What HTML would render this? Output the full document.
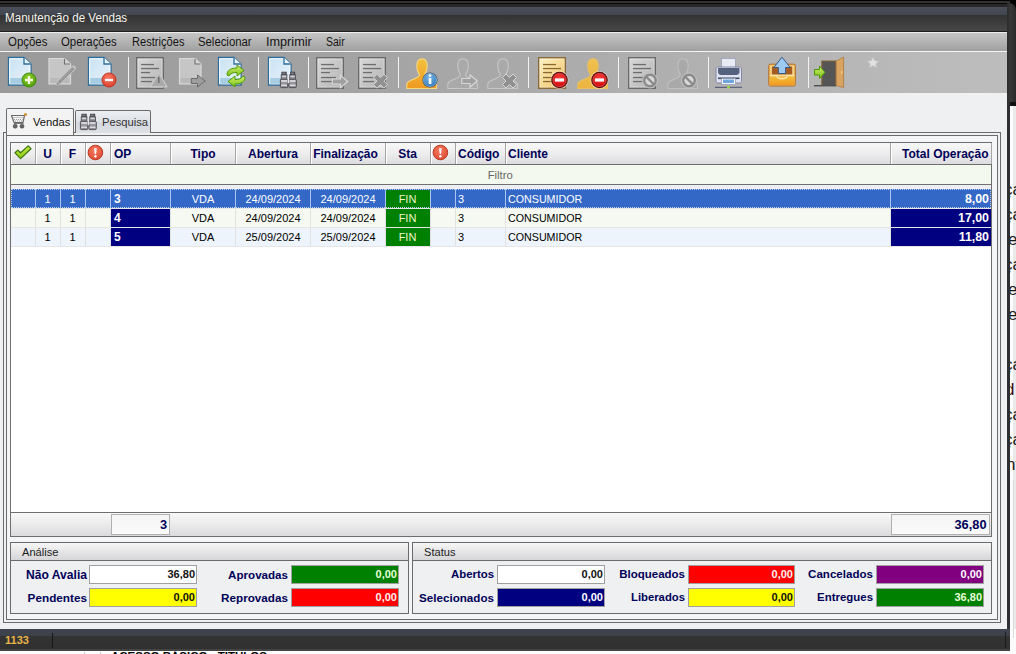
<!DOCTYPE html>
<html><head><meta charset="utf-8">
<style>
*{margin:0;padding:0;box-sizing:border-box}
html,body{width:1016px;height:654px;overflow:hidden;background:#fff;font-family:"Liberation Sans",sans-serif}
.a{position:absolute}
.t{white-space:nowrap;line-height:1}
svg{position:absolute;overflow:visible}
</style></head><body>

<div class="a" style="left:0px;top:0px;width:1016px;height:654px;background:#fdfdfd"></div>
<div class="a" style="left:0px;top:0px;width:1007px;height:651px;background:#eff0f2"></div>
<div class="a" style="left:0px;top:0px;width:1016px;height:7px;background:#000"></div>
<div class="a" style="left:0px;top:1px;width:1012px;height:2px;background:#333"></div>
<div class="a" style="left:0px;top:3px;width:1012px;height:1px;background:#080808"></div>
<div class="a" style="left:0px;top:4px;width:1010px;height:3px;background:#282828"></div>
<div class="a" style="left:0px;top:7px;width:1007px;height:8px;background:linear-gradient(#4a4f5a,#41464f)"></div>
<div class="a" style="left:0px;top:15px;width:1007px;height:16px;background:linear-gradient(#333,#474747)"></div>
<div class="a" style="left:0px;top:31px;width:1007px;height:1px;background:#1e1e1e"></div>
<div class="a t" style="left:5px;top:12px;font-size:12.5px;color:#f3f3ec;transform:scaleX(0.93);transform-origin:0 0">Manutenção de Vendas</div>
<div class="a" style="left:1010px;top:0px;width:6px;height:106px;background:#000"></div>
<div class="a" style="left:1007px;top:3px;width:9px;height:103px;background:linear-gradient(90deg,#2c2c2c,#383838 40%,#2a2a2a);border-top-right-radius:7px"></div>
<div class="a" style="left:1010px;top:102px;width:6px;height:4px;background:#111"></div>
<div class="a" style="left:1007px;top:104px;width:3px;height:547px;background:#2f3033"></div>
<div class="a" style="left:1010px;top:106px;width:6px;height:548px;overflow:hidden;background:#fcfcfc"><div class="a" style="left:3px;top:0;width:3px;height:548px;background:#eaeaea"></div><div class="a t" style="left:-6px;top:75px;font-size:17px;color:#1a1a1a">ça</div><div class="a t" style="left:-6px;top:100px;font-size:17px;color:#1a1a1a">ça</div><div class="a t" style="left:-2px;top:125px;font-size:17px;color:#1a1a1a">e</div><div class="a t" style="left:-6px;top:150px;font-size:17px;color:#1a1a1a">ça</div><div class="a t" style="left:-2px;top:175px;font-size:17px;color:#1a1a1a">e</div><div class="a t" style="left:-2px;top:200px;font-size:17px;color:#1a1a1a">er</div><div class="a t" style="left:-6px;top:250px;font-size:17px;color:#1a1a1a">ça</div><div class="a t" style="left:-5px;top:275px;font-size:17px;color:#3a1010">d</div><div class="a t" style="left:-6px;top:300px;font-size:17px;color:#1a1a1a">ça</div><div class="a t" style="left:-6px;top:325px;font-size:17px;color:#1a1a1a">ça</div><div class="a t" style="left:-4px;top:350px;font-size:17px;color:#1a1a1a">nt</div></div>
<div class="a" style="left:1010px;top:629px;width:6px;height:25px;background:#fbfbfb"></div>
<div class="a" style="left:1013px;top:480px;width:1px;height:158px;background:#dadada"></div>
<div class="a" style="left:0px;top:629px;width:1010px;height:22px;background:linear-gradient(#40444c 0,#3d4149 7px,#333 7px,#303030)"></div>
<div class="a" style="left:1005px;top:632px;width:1px;height:16px;background:#1a1a1a"></div>
<div class="a" style="left:0px;top:649px;width:1010px;height:2px;background:#434343"></div>
<div class="a" style="left:0px;top:651px;width:1016px;height:3px;background:#fdfdfd"></div>
<div class="a" style="left:84px;top:652px;width:1px;height:2px;background:#c8c8c8"></div>
<div class="a" style="left:100px;top:652px;width:1px;height:2px;background:#c8c8c8"></div>
<div class="a" style="left:0;top:651px;width:1010px;height:3px;overflow:hidden"><div class="a t" style="left:111px;top:0px;font-size:11.5px;font-weight:bold;color:#000;letter-spacing:0px">ACESSO BÁSICO - TITULOS</div></div>
<div class="a t" style="left:5px;top:635px;font-size:11px;font-weight:bold;color:#e8b54a">1133</div>
<div class="a" style="left:52px;top:633px;width:1px;height:15px;background:#161616"></div>
<div class="a" style="left:0px;top:32px;width:1007px;height:1px;background:#ececec"></div>
<div class="a" style="left:0px;top:33px;width:1007px;height:18px;background:linear-gradient(#c6c6c6,#a0a0a0)"></div>
<div class="a" style="left:0px;top:51px;width:1007px;height:1px;background:#f4f4f4"></div>
<div class="a t" style="left:7.5px;top:36px;font-size:12px;color:#141414;transform:scaleX(0.952);transform-origin:0 0">Opções</div>
<div class="a t" style="left:61.4px;top:36px;font-size:12px;color:#141414;transform:scaleX(0.949);transform-origin:0 0">Operações</div>
<div class="a t" style="left:131.5px;top:36px;font-size:12px;color:#141414;transform:scaleX(0.926);transform-origin:0 0">Restrições</div>
<div class="a t" style="left:198.2px;top:36px;font-size:12px;color:#141414;transform:scaleX(0.945);transform-origin:0 0">Selecionar</div>
<div class="a t" style="left:266.3px;top:36px;font-size:12px;color:#141414;transform:scaleX(1.055);transform-origin:0 0">Imprimir</div>
<div class="a t" style="left:326.2px;top:36px;font-size:12px;color:#141414;transform:scaleX(0.873);transform-origin:0 0">Sair</div>
<div class="a" style="left:0px;top:52px;width:1007px;height:41px;background:linear-gradient(90deg,#9a9a9a,#a3a3a3 35%,#b3b3b3 75%,#bdbdbd)"></div>
<div class="a" style="left:128px;top:57px;width:1px;height:31px;background:#f2f2f2"></div>
<div class="a" style="left:258px;top:57px;width:1px;height:31px;background:#f2f2f2"></div>
<div class="a" style="left:308px;top:57px;width:1px;height:31px;background:#f2f2f2"></div>
<div class="a" style="left:398px;top:57px;width:1px;height:31px;background:#f2f2f2"></div>
<div class="a" style="left:528px;top:57px;width:1px;height:31px;background:#f2f2f2"></div>
<div class="a" style="left:618px;top:57px;width:1px;height:31px;background:#f2f2f2"></div>
<div class="a" style="left:708px;top:57px;width:1px;height:31px;background:#f2f2f2"></div>
<div class="a" style="left:808px;top:57px;width:1px;height:31px;background:#f2f2f2"></div>
<svg style="left:0;top:0" width="1016" height="100" viewBox="0 0 1016 100">
<defs>
<linearGradient id="gBlue" x1="0" y1="0" x2="1" y2="1"><stop offset="0" stop-color="#c9e2f3"/><stop offset="1" stop-color="#e9f3fa"/></linearGradient>
<linearGradient id="gGrey" x1="0" y1="0" x2="1" y2="1"><stop offset="0" stop-color="#d8d8d8"/><stop offset="1" stop-color="#b4b4b4"/></linearGradient>
<linearGradient id="gYel" x1="0" y1="0" x2="1" y2="1"><stop offset="0" stop-color="#fdf3c8"/><stop offset="1" stop-color="#f0c060"/></linearGradient>
<linearGradient id="gOr" x1="0" y1="0" x2="0" y2="1"><stop offset="0" stop-color="#f2c13e"/><stop offset="1" stop-color="#f09a22"/></linearGradient>
<linearGradient id="gOr2" x1="0" y1="0" x2="0" y2="1"><stop offset="0" stop-color="#f0c050"/><stop offset="1" stop-color="#ecb440"/></linearGradient>
<radialGradient id="gRed" cx=".5" cy=".35" r=".7"><stop offset="0" stop-color="#ff4040"/><stop offset="1" stop-color="#d00000"/></radialGradient>
<radialGradient id="gGreen" cx=".45" cy=".35" r=".7"><stop offset="0" stop-color="#8fd22c"/><stop offset="1" stop-color="#4e9c0c"/></radialGradient>
<radialGradient id="gRed2" cx=".45" cy=".35" r=".7"><stop offset="0" stop-color="#f87a62"/><stop offset="1" stop-color="#d8402a"/></radialGradient>
<radialGradient id="gInfo" cx=".45" cy=".35" r=".7"><stop offset="0" stop-color="#7cb8e8"/><stop offset="1" stop-color="#2e78b8"/></radialGradient>
<linearGradient id="gGArrow" x1="0" y1="0" x2="0" y2="1"><stop offset="0" stop-color="#d2f070"/><stop offset="1" stop-color="#7cc016"/></linearGradient>
</defs>
<path d="M8.5,57.5H24L31,64V85H8.5Z" fill="url(#gBlue)" stroke="#2e6d9b" stroke-width="1.3"/>
<path d="M9.7,58.7H23.5L29.8,64.5V83.8H9.7Z" fill="none" stroke="#f4fbff" stroke-width="1"/>
<rect x="10.2" y="78" width="19.6" height="5.8" fill="#a6cde2"/>
<path d="M24,57.5V64H31Z" fill="#e8f4fb"/>
<path d="M24,57.8V64H30.5" fill="none" stroke="#2e6d9b" stroke-width="1.3"/>
<circle cx="29" cy="80" r="7" fill="url(#gGreen)" stroke="#3f8a0a" stroke-width="1"/>
<path d="M25,80H33M29,76V84" stroke="#f6fadc" stroke-width="2.3"/>
<path d="M49.0,58.5H64.5L70.5,64V84H49.0Z" fill="#c6c6c6" stroke="#d9d9d9" stroke-width="1.2"/>
<rect x="50.0" y="78" width="19.5" height="5" fill="#b9b9b9"/>
<path d="M64.5,58.8L70.5,64V64H64.5Z" fill="#d4d4d4"/>
<path d="M64.5,58.8V64H70.0" fill="none" stroke="#707070" stroke-width="1.1"/>
<path d="M59,82.5L73.5,68" stroke="#c4c4c4" stroke-width="4.6" stroke-linecap="round"/><path d="M59,82.5L73.5,68" stroke="#8c8c8c" stroke-width="2.6"/><path d="M60.2,81.2L73,68.4" stroke="#b0b0b0" stroke-width="1"/><path d="M56.3,85.2L57.2,81.8L59.7,84.3Z" fill="#7a7a7a" stroke="#c4c4c4" stroke-width=".6"/>
<path d="M88.5,57.5H104L111,64V85H88.5Z" fill="url(#gBlue)" stroke="#2e6d9b" stroke-width="1.3"/>
<path d="M89.7,58.7H103.5L109.8,64.5V83.8H89.7Z" fill="none" stroke="#f4fbff" stroke-width="1"/>
<rect x="90.2" y="78" width="19.6" height="5.8" fill="#a6cde2"/>
<path d="M104,57.5V64H111Z" fill="#e8f4fb"/>
<path d="M104,57.8V64H110.5" fill="none" stroke="#2e6d9b" stroke-width="1.3"/>
<circle cx="109" cy="80" r="7" fill="url(#gRed2)" stroke="#c03020" stroke-width="1"/>
<path d="M105,80H113" stroke="#fff" stroke-width="2.3"/>
<rect x="136.7" y="57.7" width="26.6" height="30.6" fill="url(#gGrey)" stroke="#6a6a6a" stroke-width="1.4"/>
<rect x="138" y="59" width="24" height="28" fill="none" stroke="rgba(255,255,255,.35)" stroke-width="1"/><rect x="141" y="63.9" width="13" height="1.3" fill="#6d6d6d"/><rect x="141" y="67.9" width="18" height="1.3" fill="#6d6d6d"/><rect x="141" y="71.9" width="9" height="1.3" fill="#6d6d6d"/><rect x="141" y="76.9" width="15" height="1.3" fill="#6d6d6d"/><rect x="141" y="80.9" width="11" height="1.3" fill="#6d6d6d"/>
<path d="M158.8,72.8L167,86.8H150.6Z" fill="#a9a9a9" stroke="#cacaca" stroke-width="1.2" stroke-linejoin="round"/><path d="M158.8,77V83" stroke="#6e6e6e" stroke-width="1.5"/>
<path d="M179.5,58.5H195L201,64V84H179.5Z" fill="#c6c6c6" stroke="#d9d9d9" stroke-width="1.2"/>
<rect x="180.5" y="78" width="19.5" height="5" fill="#b9b9b9"/>
<path d="M195,58.8L201,64V64H195Z" fill="#d4d4d4"/>
<path d="M195,58.8V64H200.5" fill="none" stroke="#707070" stroke-width="1.1"/>
<path d="M191.3,78.5H197.5V75L205.2,81L197.5,87V83.5H191.3Z" fill="#9e9e9e" stroke="#6a6a6a" stroke-width="1"/>
<path d="M218.5,57.5H234L241,64V85H218.5Z" fill="url(#gBlue)" stroke="#2e6d9b" stroke-width="1.3"/>
<path d="M219.7,58.7H233.5L239.8,64.5V83.8H219.7Z" fill="none" stroke="#f4fbff" stroke-width="1"/>
<rect x="220.2" y="78" width="19.6" height="5.8" fill="#a6cde2"/>
<path d="M234,57.5V64H241Z" fill="#e8f4fb"/>
<path d="M234,57.8V64H240.5" fill="none" stroke="#2e6d9b" stroke-width="1.3"/>
<path d="M227,75C227,70 231,68 237,68V65L244,70.5L237,76V72.5C233,72.5 231,73 229,76Z" fill="url(#gGArrow)" stroke="#4e9a0a" stroke-width="1"/>
<path d="M245,77C245,82 241,84 235,84V87L228,81.5L235,76V79.5C239,79.5 241,79 243,76Z" fill="url(#gGArrow)" stroke="#4e9a0a" stroke-width="1"/>
<path d="M268.5,57.5H284L291,64V85H268.5Z" fill="url(#gBlue)" stroke="#2e6d9b" stroke-width="1.3"/>
<path d="M269.7,58.7H283.5L289.8,64.5V83.8H269.7Z" fill="none" stroke="#f4fbff" stroke-width="1"/>
<rect x="270.2" y="78" width="19.6" height="5.8" fill="#a6cde2"/>
<path d="M284,57.5V64H291Z" fill="#e8f4fb"/>
<path d="M284,57.8V64H290.5" fill="none" stroke="#2e6d9b" stroke-width="1.3"/>
<rect x="281.8" y="72" width="4.6" height="2.8" fill="#4c4c54" stroke="#3a3a40" stroke-width=".5"/>
<rect x="282.6" y="72.6" width="2.6" height="1" fill="#9a9aa4"/>
<rect x="281.2" y="74.8" width="5.8" height="4.6" fill="#8e8e94" stroke="#4a4a50" stroke-width=".8"/>
<rect x="282" y="75.6" width="4.2" height="1.6" fill="#d0d0d4"/>
<rect x="280.4" y="79.2" width="7.4" height="8.4" rx="1" fill="#96969c" stroke="#48484e" stroke-width=".9"/>
<rect x="281.2" y="80.2" width="5.8" height="1.6" fill="#e4e4e8"/>
<rect x="281.2" y="84.6" width="5.8" height="1.4" fill="#dcdce0"/>
<rect x="290.3" y="72" width="4.6" height="2.8" fill="#4c4c54" stroke="#3a3a40" stroke-width=".5"/>
<rect x="291.1" y="72.6" width="2.6" height="1" fill="#9a9aa4"/>
<rect x="289.7" y="74.8" width="5.8" height="4.6" fill="#8e8e94" stroke="#4a4a50" stroke-width=".8"/>
<rect x="290.5" y="75.6" width="4.2" height="1.6" fill="#d0d0d4"/>
<rect x="288.9" y="79.2" width="7.4" height="8.4" rx="1" fill="#96969c" stroke="#48484e" stroke-width=".9"/>
<rect x="289.7" y="80.2" width="5.8" height="1.6" fill="#e4e4e8"/>
<rect x="289.7" y="84.6" width="5.8" height="1.4" fill="#dcdce0"/>
<rect x="287.6" y="76.5" width="1.5" height="6.5" fill="#e8e8ea"/>
<rect x="316.7" y="57.7" width="26.6" height="30.6" fill="url(#gGrey)" stroke="#6a6a6a" stroke-width="1.4"/>
<rect x="318" y="59" width="24" height="28" fill="none" stroke="rgba(255,255,255,.35)" stroke-width="1"/><rect x="321" y="63.9" width="13" height="1.3" fill="#6d6d6d"/><rect x="321" y="67.9" width="18" height="1.3" fill="#6d6d6d"/><rect x="321" y="71.9" width="9" height="1.3" fill="#6d6d6d"/><rect x="321" y="76.9" width="15" height="1.3" fill="#6d6d6d"/><rect x="321" y="80.9" width="11" height="1.3" fill="#6d6d6d"/>
<path d="M332.3,79.0H340.5V75.3L347.7,81.5L340.5,87.7V84.0H332.3Z" fill="#a0a0a0" stroke="#d8d8d8" stroke-width="1.2"/>
<rect x="358.7" y="57.7" width="26.6" height="30.6" fill="url(#gGrey)" stroke="#6a6a6a" stroke-width="1.4"/>
<rect x="360" y="59" width="24" height="28" fill="none" stroke="rgba(255,255,255,.35)" stroke-width="1"/><rect x="363" y="63.9" width="13" height="1.3" fill="#6d6d6d"/><rect x="363" y="67.9" width="18" height="1.3" fill="#6d6d6d"/><rect x="363" y="71.9" width="9" height="1.3" fill="#6d6d6d"/><rect x="363" y="76.9" width="15" height="1.3" fill="#6d6d6d"/><rect x="363" y="80.9" width="11" height="1.3" fill="#6d6d6d"/>
<path d="M373.5,77.7L377.0,74.2L380.5,77.7L384.0,74.2L387.5,77.7L384.0,81.2L387.5,84.7L384.0,88.2L380.5,84.7L377.0,88.2L373.5,84.7L377.0,81.2Z" fill="#909090" stroke="#d6d6d6" stroke-width="1"/>
<path d="M422,58.8C417,58.8 416.8,64 416.8,66.5C416.8,70 418.3,73 419.5,75C419.5,76.5 417,77.5 414,79C410,80.5 407,82 406.8,84V88.5H436.5V84C436,82 433,80.5 430,79C427,77.5 424.5,76.5 424.5,75C425.7,73 427.2,70 427.2,66.5C427.2,64 427,58.8 422,58.8Z" fill="url(#gOr)" stroke="#f6d880" stroke-width="1.1"/>
<circle cx="430" cy="80" r="7.6" fill="#34526e"/><circle cx="430" cy="80" r="6.5" fill="url(#gInfo)" stroke="#a8d0f0" stroke-width=".6"/>
<rect x="428.8" y="78" width="2.5" height="6" fill="#fff"/><circle cx="430" cy="75.6" r="1.4" fill="#fff"/>
<path d="M463,58.8C458,58.8 457.8,64 457.8,66.5C457.8,70 459.3,73 460.5,75C460.5,76.5 458,77.5 455,79C451,80.5 448,82 447.8,84V88.5H477.5V84C477,82 474,80.5 471,79C468,77.5 465.5,76.5 465.5,75C466.7,73 468.2,70 468.2,66.5C468.2,64 468,58.8 463,58.8Z" fill="#a9a9a9" stroke="#c6c6c6" stroke-width="1.1"/>
<path d="M461.8,78.5H470V74.8L477.2,81L470,87.2V83.5H461.8Z" fill="#a0a0a0" stroke="#d8d8d8" stroke-width="1.2"/>
<path d="M503,58.8C498,58.8 497.8,64 497.8,66.5C497.8,70 499.3,73 500.5,75C500.5,76.5 498,77.5 495,79C491,80.5 488,82 487.8,84V88.5H517.5V84C517,82 514,80.5 511,79C508,77.5 505.5,76.5 505.5,75C506.7,73 508.2,70 508.2,66.5C508.2,64 508,58.8 503,58.8Z" fill="#a9a9a9" stroke="#c6c6c6" stroke-width="1.1"/>
<path d="M502.5,77.5L506.0,74L509.5,77.5L513.0,74L516.5,77.5L513.0,81L516.5,84.5L513.0,88L509.5,84.5L506.0,88L502.5,84.5L506.0,81Z" fill="#909090" stroke="#d6d6d6" stroke-width="1"/>
<rect x="538.7" y="57.7" width="26.6" height="30.6" fill="url(#gYel)" stroke="#8a6a3a" stroke-width="1.4"/>
<rect x="540" y="59" width="24" height="28" fill="none" stroke="rgba(255,255,255,.35)" stroke-width="1"/><rect x="543" y="63.9" width="13" height="1.3" fill="#8a6a30"/><rect x="543" y="67.9" width="18" height="1.3" fill="#8a6a30"/><rect x="543" y="71.9" width="9" height="1.3" fill="#8a6a30"/><rect x="543" y="76.9" width="15" height="1.3" fill="#8a6a30"/><rect x="543" y="80.9" width="11" height="1.3" fill="#8a6a30"/>
<circle cx="559.5" cy="80" r="9.1" fill="rgba(255,240,230,.55)"/><circle cx="559.5" cy="80" r="8.3" fill="#640808"/><circle cx="559.5" cy="80" r="6.6" fill="url(#gRed)" stroke="#ff9090" stroke-width=".5"/>
<rect x="554.9" y="78.4" width="9.2" height="3.2" fill="#fff"/>
<path d="M593,58.8C588,58.8 587.8,64 587.8,66.5C587.8,70 589.3,73 590.5,75C590.5,76.5 588,77.5 585,79C581,80.5 578,82 577.8,84V88.5H607.5V84C607,82 604,80.5 601,79C598,77.5 595.5,76.5 595.5,75C596.7,73 598.2,70 598.2,66.5C598.2,64 598,58.8 593,58.8Z" fill="url(#gOr2)" stroke="#e8c060" stroke-width="1.1"/>
<circle cx="599.5" cy="80" r="9.1" fill="rgba(255,240,230,.55)"/><circle cx="599.5" cy="80" r="8.3" fill="#640808"/><circle cx="599.5" cy="80" r="6.6" fill="url(#gRed)" stroke="#ff9090" stroke-width=".5"/>
<rect x="594.9" y="78.4" width="9.2" height="3.2" fill="#fff"/>
<rect x="628.7" y="57.7" width="26.6" height="30.6" fill="url(#gGrey)" stroke="#6a6a6a" stroke-width="1.4"/>
<rect x="630" y="59" width="24" height="28" fill="none" stroke="rgba(255,255,255,.35)" stroke-width="1"/><rect x="633" y="63.9" width="13" height="1.3" fill="#6d6d6d"/><rect x="633" y="67.9" width="18" height="1.3" fill="#6d6d6d"/><rect x="633" y="71.9" width="9" height="1.3" fill="#6d6d6d"/><rect x="633" y="76.9" width="15" height="1.3" fill="#6d6d6d"/><rect x="633" y="80.9" width="11" height="1.3" fill="#6d6d6d"/>
<circle cx="650" cy="80.5" r="7.6" fill="#d8d8d8" stroke="#bdbdbd" stroke-width=".8"/><circle cx="650" cy="80.5" r="5.8" fill="none" stroke="#8a8a8a" stroke-width="2.4"/>
<path d="M646,76.5L654,84.5" stroke="#8a8a8a" stroke-width="2.4"/>
<path d="M683,58.8C678,58.8 677.8,64 677.8,66.5C677.8,70 679.3,73 680.5,75C680.5,76.5 678,77.5 675,79C671,80.5 668,82 667.8,84V88.5H697.5V84C697,82 694,80.5 691,79C688,77.5 685.5,76.5 685.5,75C686.7,73 688.2,70 688.2,66.5C688.2,64 688,58.8 683,58.8Z" fill="#a9a9a9" stroke="#c0c0c0" stroke-width="1.1"/>
<circle cx="689" cy="80.5" r="7.6" fill="#d8d8d8" stroke="#bdbdbd" stroke-width=".8"/><circle cx="689" cy="80.5" r="5.8" fill="none" stroke="#8a8a8a" stroke-width="2.4"/>
<path d="M685,76.5L693,84.5" stroke="#8a8a8a" stroke-width="2.4"/>
<rect x="721.5" y="58.5" width="14" height="11" fill="#e9ebf5" stroke="#9aa0b8" stroke-width=".8"/>
<path d="M716,69C716,67.5 717,67 718.5,67H738.5C740,67 741.5,67.5 741.5,69V81.5C741.5,82.5 740.5,83 739.5,83H718C716.8,83 716,82.5 716,81.5Z" fill="#dfe2f1" stroke="#7a80a0" stroke-width=".9"/>
<path d="M718,68H739.5V72C739.5,74.5 737,75 735,75H722C720,75 718,74.5 718,72Z" fill="#55627e"/>
<rect x="718" y="77.5" width="21.5" height="1.6" fill="#3e4a66"/>
<rect x="721.5" y="78.5" width="14" height="6" fill="#fff" stroke="#8088a8" stroke-width=".6"/><rect x="723" y="79.5" width="11" height="3.6" fill="#6ea6de"/>
<rect x="715" y="86.8" width="27" height="1.1" fill="#555a78"/><circle cx="728.5" cy="87.3" r="1.3" fill="#9ce030"/>
<rect x="768.8" y="64.2" width="26.5" height="21.8" rx="1.5" fill="#f4c060" stroke="#b06a24" stroke-width="1"/>
<rect x="770.5" y="65.8" width="23" height="10" fill="#fbe29c"/><rect x="771.8" y="66.5" width="20.5" height="8" fill="#a65c20"/>
<path d="M770,75.6H776.5C777.5,80 786.5,80 787.5,75.6H794.3V85H770Z" fill="url(#gOr)"/><path d="M770,75.6H776.5C777.5,80 786.5,80 787.5,75.6H794.3" fill="none" stroke="#fde6a8" stroke-width="1.3"/>
<path d="M782,57.2L790.2,67.5H785.6V73.5H778.4V67.5H773.8Z" fill="#9ccaf0" stroke="#3a5a88" stroke-width="1"/>
<rect x="821.8" y="61" width="14.4" height="24.5" fill="#555" stroke="#8a6434" stroke-width="1"/>
<path d="M836.2,61.2L843.6,57V87.5L836.2,85.6Z" fill="#d9a462" stroke="#b07a38" stroke-width=".8"/>
<rect x="841" y="71" width="1.3" height="3" fill="#f0d070"/>
<rect x="814" y="85" width="22" height="1.4" fill="#4e4e4e"/>
<path d="M814.5,69.5H819.5V66L825,72.3L819.5,78.5V75H814.5Z" fill="url(#gGArrow)" stroke="#4a9a08" stroke-width="1"/>
<path d="M873,57.2L874.7,60.8L878.6,61.2L875.7,63.8L876.5,67.6L873,65.6L869.5,67.6L870.3,63.8L867.4,61.2L871.3,60.8Z" fill="#e2e2e2" stroke="#c4c4c4" stroke-width=".6"/>
</svg>
<div class="a" style="left:3px;top:132px;width:998px;height:491px;border:1px solid #6b6b6b;background:#eff0f2"></div>
<div class="a" style="left:6px;top:108px;width:68px;height:27px;border:1px solid #6b6b6b;border-bottom:none;border-radius:2px 2px 0 0;background:#f3f3f3"></div>
<div class="a" style="left:75px;top:110px;width:76px;height:23px;border:1px solid #6b6b6b;border-bottom:none;border-radius:2px 2px 0 0;background:linear-gradient(#edeff2,#dfe2e7 45%,#d5d9df 55%,#dde0e5)"></div>
<div class="a t" style="left:33px;top:117px;font-size:11.2px;color:#111">Vendas</div>
<div class="a t" style="left:102px;top:117px;font-size:11.2px;color:#333">Pesquisa</div>
<div class="a" style="left:6px;top:135px;width:992px;height:485px;border:1px solid #6b6b6b;background:#f4f5f6"></div>
<div class="a" style="left:10px;top:142px;width:982px;height:395px;border:1px solid #6e6e6e;background:#fff"></div>
<div class="a" style="left:11px;top:143px;width:25px;height:21px;background:linear-gradient(#f8f8f8,#ececed 55%,#dcdcdf);border-right:1px solid #a5a5a5;border-left:1px solid #fff"></div>
<div class="a" style="left:36px;top:143px;width:25px;height:21px;background:linear-gradient(#f8f8f8,#ececed 55%,#dcdcdf);border-right:1px solid #a5a5a5;border-left:1px solid #fff"></div>
<div class="a" style="left:61px;top:143px;width:25px;height:21px;background:linear-gradient(#f8f8f8,#ececed 55%,#dcdcdf);border-right:1px solid #a5a5a5;border-left:1px solid #fff"></div>
<div class="a" style="left:86px;top:143px;width:25px;height:21px;background:linear-gradient(#f8f8f8,#ececed 55%,#dcdcdf);border-right:1px solid #a5a5a5;border-left:1px solid #fff"></div>
<div class="a" style="left:111px;top:143px;width:60px;height:21px;background:linear-gradient(#f8f8f8,#ececed 55%,#dcdcdf);border-right:1px solid #a5a5a5;border-left:1px solid #fff"></div>
<div class="a" style="left:171px;top:143px;width:65px;height:21px;background:linear-gradient(#f8f8f8,#ececed 55%,#dcdcdf);border-right:1px solid #a5a5a5;border-left:1px solid #fff"></div>
<div class="a" style="left:236px;top:143px;width:75px;height:21px;background:linear-gradient(#f8f8f8,#ececed 55%,#dcdcdf);border-right:1px solid #a5a5a5;border-left:1px solid #fff"></div>
<div class="a" style="left:311px;top:143px;width:75px;height:21px;background:linear-gradient(#f8f8f8,#ececed 55%,#dcdcdf);border-right:1px solid #a5a5a5;border-left:1px solid #fff"></div>
<div class="a" style="left:386px;top:143px;width:45px;height:21px;background:linear-gradient(#f8f8f8,#ececed 55%,#dcdcdf);border-right:1px solid #a5a5a5;border-left:1px solid #fff"></div>
<div class="a" style="left:431px;top:143px;width:25px;height:21px;background:linear-gradient(#f8f8f8,#ececed 55%,#dcdcdf);border-right:1px solid #a5a5a5;border-left:1px solid #fff"></div>
<div class="a" style="left:456px;top:143px;width:50px;height:21px;background:linear-gradient(#f8f8f8,#ececed 55%,#dcdcdf);border-right:1px solid #a5a5a5;border-left:1px solid #fff"></div>
<div class="a" style="left:506px;top:143px;width:385px;height:21px;background:linear-gradient(#f8f8f8,#ececed 55%,#dcdcdf);border-right:1px solid #a5a5a5;border-left:1px solid #fff"></div>
<div class="a" style="left:891px;top:143px;width:101px;height:21px;background:linear-gradient(#f8f8f8,#ececed 55%,#dcdcdf);border-right:1px solid #a5a5a5;border-left:1px solid #fff"></div>
<div class="a" style="left:11px;top:164px;width:980px;height:1px;background:#6e6e6e"></div>
<div class="a t" style="left:27.5px;top:148px;width:40px;text-align:center;font-size:12px;font-weight:bold;color:#000058">U</div>
<div class="a t" style="left:52.5px;top:148px;width:40px;text-align:center;font-size:12px;font-weight:bold;color:#000058">F</div>
<div class="a t" style="left:114px;top:148px;font-size:12px;font-weight:bold;color:#000058">OP</div>
<div class="a t" style="left:163.0px;top:148px;width:80px;text-align:center;font-size:12px;font-weight:bold;color:#000058">Tipo</div>
<div class="a t" style="left:233.0px;top:148px;width:80px;text-align:center;font-size:12px;font-weight:bold;color:#000058">Abertura</div>
<div class="a t" style="left:305.5px;top:148px;width:80px;text-align:center;font-size:12px;font-weight:bold;color:#000058">Finalização</div>
<div class="a t" style="left:377.5px;top:148px;width:60px;text-align:center;font-size:12px;font-weight:bold;color:#000058">Sta</div>
<div class="a t" style="left:458px;top:148px;font-size:12px;font-weight:bold;color:#000058">Código</div>
<div class="a t" style="left:508px;top:148px;font-size:12px;font-weight:bold;color:#000058">Cliente</div>
<div class="a t" style="left:788.5px;top:148px;width:200px;text-align:right;font-size:12px;font-weight:bold;color:#000058">Total Operação</div>
<div class="a" style="left:11px;top:165px;width:980px;height:19px;background:#f4f9ef"></div>
<div class="a t" style="left:460.2px;top:170px;width:80px;text-align:center;font-size:11.3px;color:#666">Filtro</div>
<div class="a" style="left:11px;top:184px;width:980px;height:1px;background:#707070"></div>
<div class="a" style="left:11px;top:185px;width:980px;height:4px;background:#eeeff2"></div>
<div class="a" style="left:11px;top:189px;width:980px;height:19px;background:#3468c7"></div>
<div class="a" style="left:35px;top:189px;width:1px;height:19px;background:#a9c4ee"></div>
<div class="a" style="left:60px;top:189px;width:1px;height:19px;background:#a9c4ee"></div>
<div class="a" style="left:85px;top:189px;width:1px;height:19px;background:#a9c4ee"></div>
<div class="a" style="left:110px;top:189px;width:1px;height:19px;background:#a9c4ee"></div>
<div class="a" style="left:170px;top:189px;width:1px;height:19px;background:#a9c4ee"></div>
<div class="a" style="left:235px;top:189px;width:1px;height:19px;background:#a9c4ee"></div>
<div class="a" style="left:310px;top:189px;width:1px;height:19px;background:#a9c4ee"></div>
<div class="a" style="left:385px;top:189px;width:1px;height:19px;background:#a9c4ee"></div>
<div class="a" style="left:430px;top:189px;width:1px;height:19px;background:#a9c4ee"></div>
<div class="a" style="left:455px;top:189px;width:1px;height:19px;background:#a9c4ee"></div>
<div class="a" style="left:505px;top:189px;width:1px;height:19px;background:#a9c4ee"></div>
<div class="a" style="left:890px;top:189px;width:1px;height:19px;background:#a9c4ee"></div>
<div class="a" style="left:386px;top:190px;width:44px;height:18px;background:#008000"></div>
<div class="a t" style="left:37.5px;top:194px;width:20px;text-align:center;font-size:11px;color:#fff">1</div>
<div class="a t" style="left:62.5px;top:194px;width:20px;text-align:center;font-size:11px;color:#fff">1</div>
<div class="a t" style="left:114px;top:193px;font-size:12px;font-weight:bold;color:#fff">3</div>
<div class="a t" style="left:173.0px;top:194px;width:60px;text-align:center;font-size:11px;color:#fff">VDA</div>
<div class="a t" style="left:238.0px;top:194px;width:70px;text-align:center;font-size:11px;color:#fff">24/09/2024</div>
<div class="a t" style="left:313.0px;top:194px;width:70px;text-align:center;font-size:11px;color:#fff">24/09/2024</div>
<div class="a t" style="left:387.5px;top:194px;width:40px;text-align:center;font-size:11px;color:#f4f4c8">FIN</div>
<div class="a t" style="left:458px;top:194px;font-size:11px;color:#fff">3</div>
<div class="a t" style="left:508px;top:194px;font-size:10.7px;color:#fff">CONSUMIDOR</div>
<div class="a t" style="left:789px;top:193px;width:200px;text-align:right;font-size:12.4px;font-weight:bold;color:#fff">8,00</div>
<div class="a" style="left:11px;top:189px;width:980px;height:19px;border:1px dotted #b8cdf0"></div>
<div class="a" style="left:11px;top:208px;width:980px;height:19px;background:#f5f9f1"></div>
<div class="a" style="left:11px;top:208px;width:980px;height:1px;background:#e6e6e6"></div>
<div class="a" style="left:35px;top:208px;width:1px;height:19px;background:#e1e1e1"></div>
<div class="a" style="left:60px;top:208px;width:1px;height:19px;background:#e1e1e1"></div>
<div class="a" style="left:85px;top:208px;width:1px;height:19px;background:#e1e1e1"></div>
<div class="a" style="left:110px;top:208px;width:1px;height:19px;background:#e1e1e1"></div>
<div class="a" style="left:170px;top:208px;width:1px;height:19px;background:#e1e1e1"></div>
<div class="a" style="left:235px;top:208px;width:1px;height:19px;background:#e1e1e1"></div>
<div class="a" style="left:310px;top:208px;width:1px;height:19px;background:#e1e1e1"></div>
<div class="a" style="left:385px;top:208px;width:1px;height:19px;background:#e1e1e1"></div>
<div class="a" style="left:430px;top:208px;width:1px;height:19px;background:#e1e1e1"></div>
<div class="a" style="left:455px;top:208px;width:1px;height:19px;background:#e1e1e1"></div>
<div class="a" style="left:505px;top:208px;width:1px;height:19px;background:#e1e1e1"></div>
<div class="a" style="left:890px;top:208px;width:1px;height:19px;background:#e1e1e1"></div>
<div class="a" style="left:111px;top:209px;width:59px;height:18px;background:#000080"></div>
<div class="a" style="left:891px;top:209px;width:100px;height:18px;background:#000080"></div>
<div class="a" style="left:386px;top:209px;width:44px;height:18px;background:#008000"></div>
<div class="a t" style="left:37.5px;top:213px;width:20px;text-align:center;font-size:11px;color:#000">1</div>
<div class="a t" style="left:62.5px;top:213px;width:20px;text-align:center;font-size:11px;color:#000">1</div>
<div class="a t" style="left:114px;top:212px;font-size:12px;font-weight:bold;color:#fff">4</div>
<div class="a t" style="left:173.0px;top:213px;width:60px;text-align:center;font-size:11px;color:#000">VDA</div>
<div class="a t" style="left:238.0px;top:213px;width:70px;text-align:center;font-size:11px;color:#000">24/09/2024</div>
<div class="a t" style="left:313.0px;top:213px;width:70px;text-align:center;font-size:11px;color:#000">24/09/2024</div>
<div class="a t" style="left:387.5px;top:213px;width:40px;text-align:center;font-size:11px;color:#f4f4c8">FIN</div>
<div class="a t" style="left:458px;top:213px;font-size:11px;color:#000">3</div>
<div class="a t" style="left:508px;top:213px;font-size:10.7px;color:#000">CONSUMIDOR</div>
<div class="a t" style="left:789px;top:212px;width:200px;text-align:right;font-size:12.4px;font-weight:bold;color:#fff">17,00</div>
<div class="a" style="left:11px;top:227px;width:980px;height:19px;background:#eef4fc"></div>
<div class="a" style="left:11px;top:227px;width:980px;height:1px;background:#e6e6e6"></div>
<div class="a" style="left:35px;top:227px;width:1px;height:19px;background:#e1e1e1"></div>
<div class="a" style="left:60px;top:227px;width:1px;height:19px;background:#e1e1e1"></div>
<div class="a" style="left:85px;top:227px;width:1px;height:19px;background:#e1e1e1"></div>
<div class="a" style="left:110px;top:227px;width:1px;height:19px;background:#e1e1e1"></div>
<div class="a" style="left:170px;top:227px;width:1px;height:19px;background:#e1e1e1"></div>
<div class="a" style="left:235px;top:227px;width:1px;height:19px;background:#e1e1e1"></div>
<div class="a" style="left:310px;top:227px;width:1px;height:19px;background:#e1e1e1"></div>
<div class="a" style="left:385px;top:227px;width:1px;height:19px;background:#e1e1e1"></div>
<div class="a" style="left:430px;top:227px;width:1px;height:19px;background:#e1e1e1"></div>
<div class="a" style="left:455px;top:227px;width:1px;height:19px;background:#e1e1e1"></div>
<div class="a" style="left:505px;top:227px;width:1px;height:19px;background:#e1e1e1"></div>
<div class="a" style="left:890px;top:227px;width:1px;height:19px;background:#e1e1e1"></div>
<div class="a" style="left:111px;top:228px;width:59px;height:18px;background:#000080"></div>
<div class="a" style="left:891px;top:228px;width:100px;height:18px;background:#000080"></div>
<div class="a" style="left:386px;top:228px;width:44px;height:18px;background:#008000"></div>
<div class="a t" style="left:37.5px;top:232px;width:20px;text-align:center;font-size:11px;color:#000">1</div>
<div class="a t" style="left:62.5px;top:232px;width:20px;text-align:center;font-size:11px;color:#000">1</div>
<div class="a t" style="left:114px;top:231px;font-size:12px;font-weight:bold;color:#fff">5</div>
<div class="a t" style="left:173.0px;top:232px;width:60px;text-align:center;font-size:11px;color:#000">VDA</div>
<div class="a t" style="left:238.0px;top:232px;width:70px;text-align:center;font-size:11px;color:#000">25/09/2024</div>
<div class="a t" style="left:313.0px;top:232px;width:70px;text-align:center;font-size:11px;color:#000">25/09/2024</div>
<div class="a t" style="left:387.5px;top:232px;width:40px;text-align:center;font-size:11px;color:#f4f4c8">FIN</div>
<div class="a t" style="left:458px;top:232px;font-size:11px;color:#000">3</div>
<div class="a t" style="left:508px;top:232px;font-size:10.7px;color:#000">CONSUMIDOR</div>
<div class="a t" style="left:789px;top:231px;width:200px;text-align:right;font-size:12.4px;font-weight:bold;color:#fff">11,80</div>
<div class="a" style="left:11px;top:246px;width:980px;height:1px;background:#e6e6e6"></div>
<div class="a" style="left:11px;top:512px;width:980px;height:1px;background:#6e6e6e"></div>
<div class="a" style="left:11px;top:513px;width:980px;height:23px;background:linear-gradient(#f8f8f8,#ebebec 50%,#dadadd)"></div>
<div class="a" style="left:111px;top:514px;width:59px;height:21px;border:1px solid #b0b0b0;background:linear-gradient(#f4f4f4,#fafafa)"></div>
<div class="a" style="left:891px;top:514px;width:99px;height:21px;border:1px solid #b0b0b0;background:linear-gradient(#f4f4f4,#fafafa)"></div>
<div class="a t" style="left:127px;top:519px;width:40px;text-align:right;font-size:12.8px;font-weight:bold;color:#000058">3</div>
<div class="a t" style="left:926.5px;top:519px;width:60px;text-align:right;font-size:12.8px;font-weight:bold;color:#000058">36,80</div>
<div class="a" style="left:10px;top:542px;width:399px;height:72px;border:1px solid #6b6b6b;background:#eff0f2"></div>
<div class="a" style="left:11px;top:543px;width:397px;height:17px;background:linear-gradient(#f7f7f7,#e4e4e6 55%,#d6d6d9)"></div>
<div class="a" style="left:11px;top:560px;width:397px;height:1px;background:#6b6b6b"></div>
<div class="a t" style="left:22px;top:547px;font-size:11.1px;color:#1a1a1a">Análise</div>
<div class="a" style="left:412px;top:542px;width:580px;height:72px;border:1px solid #6b6b6b;background:#eff0f2"></div>
<div class="a" style="left:413px;top:543px;width:578px;height:17px;background:linear-gradient(#f7f7f7,#e4e4e6 55%,#d6d6d9)"></div>
<div class="a" style="left:413px;top:560px;width:578px;height:1px;background:#6b6b6b"></div>
<div class="a t" style="left:424px;top:547px;font-size:11.1px;color:#1a1a1a">Status</div>
<div class="a t" style="left:-33px;top:569px;width:120px;text-align:right;font-size:12.1px;font-weight:bold;color:#000058">Não Avalia</div>
<div class="a" style="left:89px;top:565px;width:108px;height:19px;border:1px solid #a0a0a0;background:#fff"></div>
<div class="a t" style="left:115px;top:569px;width:80px;text-align:right;font-size:11px;font-weight:bold;color:#111">36,80</div>
<div class="a t" style="left:-33px;top:592px;width:120px;text-align:right;font-size:11.75px;font-weight:bold;color:#000058">Pendentes</div>
<div class="a" style="left:89px;top:588px;width:108px;height:19px;border:1px solid #a0a0a0;background:#ffff00"></div>
<div class="a t" style="left:115px;top:592px;width:80px;text-align:right;font-size:11px;font-weight:bold;color:#111">0,00</div>
<div class="a t" style="left:168px;top:569px;width:120px;text-align:right;font-size:11.6px;font-weight:bold;color:#000058">Aprovadas</div>
<div class="a" style="left:291px;top:565px;width:108px;height:19px;border:1px solid #a0a0a0;background:#008000"></div>
<div class="a t" style="left:317px;top:569px;width:80px;text-align:right;font-size:11px;font-weight:bold;color:#e8ffd8">0,00</div>
<div class="a t" style="left:168px;top:592px;width:120px;text-align:right;font-size:11.7px;font-weight:bold;color:#000058">Reprovadas</div>
<div class="a" style="left:291px;top:588px;width:108px;height:19px;border:1px solid #a0a0a0;background:#ff0000"></div>
<div class="a t" style="left:317px;top:592px;width:80px;text-align:right;font-size:11px;font-weight:bold;color:#fff0f0">0,00</div>
<div class="a t" style="left:374px;top:569px;width:120px;text-align:right;font-size:11.4px;font-weight:bold;color:#000058">Abertos</div>
<div class="a" style="left:497px;top:565px;width:108px;height:19px;border:1px solid #a0a0a0;background:#fff"></div>
<div class="a t" style="left:523px;top:569px;width:80px;text-align:right;font-size:11px;font-weight:bold;color:#111">0,00</div>
<div class="a t" style="left:374px;top:592px;width:120px;text-align:right;font-size:11.63px;font-weight:bold;color:#000058">Selecionados</div>
<div class="a" style="left:497px;top:588px;width:108px;height:19px;border:1px solid #a0a0a0;background:#000080"></div>
<div class="a t" style="left:523px;top:592px;width:80px;text-align:right;font-size:11px;font-weight:bold;color:#fff">0,00</div>
<div class="a t" style="left:565px;top:569px;width:120px;text-align:right;font-size:11.5px;font-weight:bold;color:#000058">Bloqueados</div>
<div class="a" style="left:688px;top:565px;width:107px;height:19px;border:1px solid #a0a0a0;background:#ff0000"></div>
<div class="a t" style="left:713px;top:569px;width:80px;text-align:right;font-size:11px;font-weight:bold;color:#fff0f0">0,00</div>
<div class="a t" style="left:565px;top:592px;width:120px;text-align:right;font-size:11.3px;font-weight:bold;color:#000058">Liberados</div>
<div class="a" style="left:688px;top:588px;width:107px;height:19px;border:1px solid #a0a0a0;background:#ffff00"></div>
<div class="a t" style="left:713px;top:592px;width:80px;text-align:right;font-size:11px;font-weight:bold;color:#111">0,00</div>
<div class="a t" style="left:753px;top:569px;width:120px;text-align:right;font-size:11.57px;font-weight:bold;color:#000058">Cancelados</div>
<div class="a" style="left:876px;top:565px;width:108px;height:19px;border:1px solid #a0a0a0;background:#800080"></div>
<div class="a t" style="left:902px;top:569px;width:80px;text-align:right;font-size:11px;font-weight:bold;color:#fff">0,00</div>
<div class="a t" style="left:753px;top:592px;width:120px;text-align:right;font-size:11.45px;font-weight:bold;color:#000058">Entregues</div>
<div class="a" style="left:876px;top:588px;width:108px;height:19px;border:1px solid #a0a0a0;background:#008000"></div>
<div class="a t" style="left:902px;top:592px;width:80px;text-align:right;font-size:11px;font-weight:bold;color:#e8ffd8">36,80</div>
<svg style="left:0;top:0" width="1016" height="200" viewBox="0 0 1016 200">
<defs>
<radialGradient id="gEx" cx=".45" cy=".35" r=".7"><stop offset="0" stop-color="#f47a60"/><stop offset="1" stop-color="#dc4a30"/></radialGradient>
<linearGradient id="gChk" x1="0" y1="0" x2="0" y2="1"><stop offset="0" stop-color="#c4ea48"/><stop offset="1" stop-color="#8ccc10"/></linearGradient>
</defs>
<path d="M11.5,115.5H24.5L23,122.5H14Z" fill="#f4f4f4" stroke="#6a6a6a" stroke-width="1.2" stroke-linejoin="round"/>
<path d="M13.5,117.5H23M14,119.5H22.5M15,121H22" stroke="#9a9a9a" stroke-width="1" stroke-dasharray="1,1"/>
<path d="M24.5,115.5L25.3,114.5" stroke="#6a6a6a" stroke-width="1"/><rect x="24.2" y="113.2" width="2.6" height="2.6" fill="#d0902c"/>
<path d="M14,123.5H23.5" stroke="#7a7a7a" stroke-width="1"/>
<circle cx="15.2" cy="126.2" r="2" fill="#666" stroke="#444" stroke-width=".6"/><circle cx="22" cy="126.2" r="2" fill="#666" stroke="#444" stroke-width=".6"/>
<rect x="81.8" y="114" width="4.6" height="2.8" fill="#4c4c54" stroke="#3a3a40" stroke-width=".5"/>
<rect x="82.6" y="114.6" width="2.6" height="1" fill="#9a9aa4"/>
<rect x="81.2" y="116.8" width="5.8" height="4.6" fill="#8e8e94" stroke="#4a4a50" stroke-width=".8"/>
<rect x="82" y="117.6" width="4.2" height="1.6" fill="#d0d0d4"/>
<rect x="80.4" y="121.2" width="7.4" height="8.4" rx="1" fill="#96969c" stroke="#48484e" stroke-width=".9"/>
<rect x="81.2" y="122.2" width="5.8" height="1.6" fill="#e4e4e8"/>
<rect x="81.2" y="126.6" width="5.8" height="1.4" fill="#dcdce0"/>
<rect x="90.3" y="114" width="4.6" height="2.8" fill="#4c4c54" stroke="#3a3a40" stroke-width=".5"/>
<rect x="91.1" y="114.6" width="2.6" height="1" fill="#9a9aa4"/>
<rect x="89.7" y="116.8" width="5.8" height="4.6" fill="#8e8e94" stroke="#4a4a50" stroke-width=".8"/>
<rect x="90.5" y="117.6" width="4.2" height="1.6" fill="#d0d0d4"/>
<rect x="88.9" y="121.2" width="7.4" height="8.4" rx="1" fill="#96969c" stroke="#48484e" stroke-width=".9"/>
<rect x="89.7" y="122.2" width="5.8" height="1.6" fill="#e4e4e8"/>
<rect x="89.7" y="126.6" width="5.8" height="1.4" fill="#dcdce0"/>
<rect x="87.6" y="118.5" width="1.5" height="6.5" fill="#e8e8ea"/>
<path d="M15,152.8L17.8,150.1L20.6,152.8L28.2,145.9L31,148.7L20.6,158.6Z" fill="url(#gChk)" stroke="#3a7410" stroke-width="1.2" stroke-linejoin="round"/>
<circle cx="95.4" cy="152.5" r="7.3" fill="url(#gEx)" stroke="#b83a22" stroke-width="1"/>
<path d="M94.10000000000001,148.3H96.7L96.10000000000001,154H94.7Z" fill="#fff"/><circle cx="95.4" cy="156.2" r="1.2" fill="#fff"/>
<circle cx="440.4" cy="152.5" r="7.3" fill="url(#gEx)" stroke="#b83a22" stroke-width="1"/>
<path d="M439.09999999999997,148.3H441.7L441.09999999999997,154H439.7Z" fill="#fff"/><circle cx="440.4" cy="156.2" r="1.2" fill="#fff"/>
</svg>
</body></html>
